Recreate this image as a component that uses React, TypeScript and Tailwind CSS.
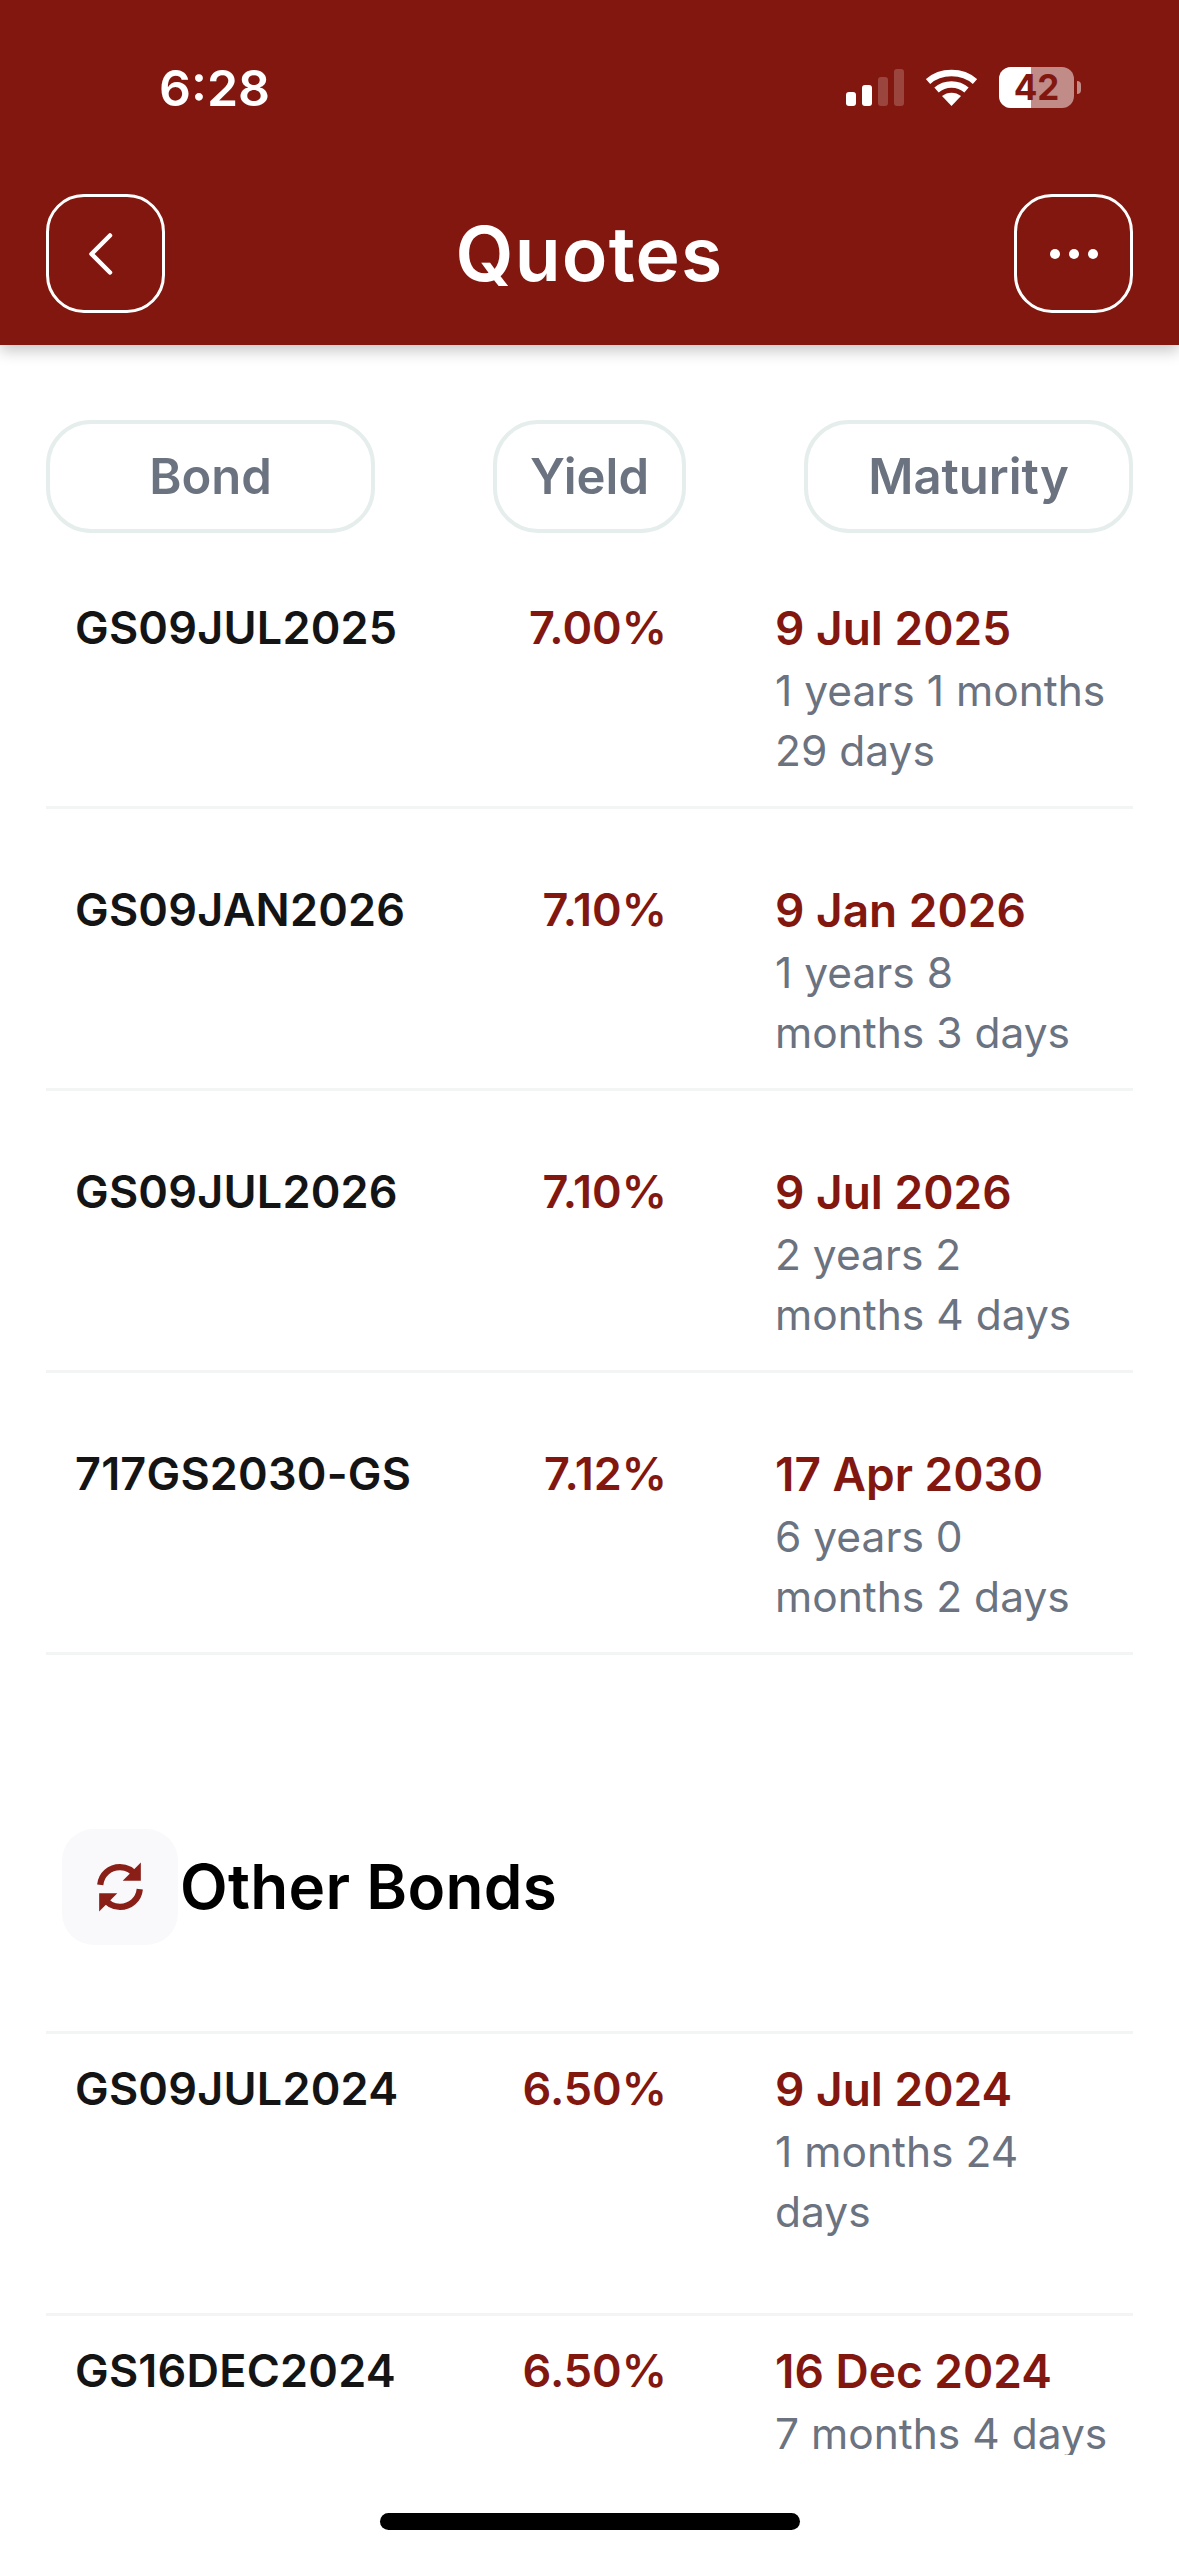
import React from "react";

const font = { fontFamily: "Inter, 'Liberation Sans', sans-serif" };

type Row = { name: string; y: string; date: string; l1: string; l2?: string };

const top: Row[] = [
  { name: "GS09JUL2025", y: "7.00%", date: "9 Jul 2025", l1: "1 years 1 months", l2: "29 days" },
  { name: "GS09JAN2026", y: "7.10%", date: "9 Jan 2026", l1: "1 years 8", l2: "months 3 days" },
  { name: "GS09JUL2026", y: "7.10%", date: "9 Jul 2026", l1: "2 years 2", l2: "months 4 days" },
  { name: "717GS2030-GS", y: "7.12%", date: "17 Apr 2030", l1: "6 years 0", l2: "months 2 days" },
];
const other: Row[] = [
  { name: "GS09JUL2024", y: "6.50%", date: "9 Jul 2024", l1: "1 months 24", l2: "days" },
  { name: "GS16DEC2024", y: "6.50%", date: "16 Dec 2024", l1: "7 months 4 days" },
];

function BondRow({ r, pad }: { r: Row; pad: string }) {
  return (
    <div className={`flex h-[282px] flex-none border-b-[3px] border-[#f3f5f5] pl-[29px] ${pad}`}>
      <div className="w-[430px] text-[45px] leading-[66px] font-semibold tracking-[0.2px] text-[#141414] whitespace-nowrap">{r.name}</div>
      <div className="w-[162px] text-right text-[45px] leading-[66px] font-semibold text-[#82170f] whitespace-nowrap">{r.y}</div>
      <div className="ml-[108px] flex flex-col whitespace-nowrap">
        <div className="text-[46px] leading-[66px] font-semibold text-[#82170f]">{r.date}</div>
        <div className="text-[42.5px] leading-[60px] text-[#6b7280]">{r.l1}</div>
        {r.l2 && <div className="text-[42.5px] leading-[60px] text-[#6b7280]">{r.l2}</div>}
      </div>
    </div>
  );
}

function Pill({ w, children }: { w: string; children: React.ReactNode }) {
  return (
    <div className={`${w} flex h-[113px] items-center justify-center rounded-[45px] border-[4px] border-[#e5eeec] text-[49px] font-semibold text-[#6b7280]`}>
      {children}
    </div>
  );
}

export default function App() {
  return (
    <div className="relative flex h-[2556px] w-[1179px] flex-col overflow-hidden bg-white" style={font}>
      <header className="relative z-10 flex h-[345px] flex-none flex-col bg-[#82170f] px-[46px] shadow-[0_6px_14px_rgba(0,0,0,0.22)]">
        <div className="flex h-[194px] flex-none items-start justify-between">
          <div className="ml-[113px] mt-[60px] text-[50px] leading-[56px] font-semibold text-white">6:28</div>
          <div className="mt-[67px] mr-[52px] flex items-start">
            <div className="mt-[2px] flex h-[37px] items-end gap-[6px]">
              <div className="h-[14px] w-[10px] rounded-[3px] bg-white" />
              <div className="h-[21px] w-[10px] rounded-[3px] bg-white" />
              <div className="h-[29px] w-[10px] rounded-[3px] bg-white/20" />
              <div className="h-[37px] w-[10px] rounded-[3px] bg-white/20" />
            </div>
            <svg className="ml-[22px] mt-[2px]" width="51" height="37" viewBox="0 0 51 37" fill="none">
              <path d="M2 12.5C14.5 1 36.5 1 49 12.5" stroke="white" strokeWidth="6.5" />
              <path d="M10.5 21C19 13.5 32 13.5 40.5 21" stroke="white" strokeWidth="6.5" />
              <path d="M25.5 37L16 27C21.5 22.5 29.5 22.5 35 27L25.5 37Z" fill="white" />
            </svg>
            <div className="relative ml-[22px] h-[41px] w-[75px] overflow-hidden rounded-[12px] bg-white/50">
              <div className="absolute left-0 top-0 h-full w-[32px] bg-white" />
              <div className="absolute inset-0 flex items-center justify-center text-[35px] font-bold leading-none text-[#82170f]">42</div>
            </div>
            <div className="ml-[3px] mt-[14px] h-[13px] w-[4px] rounded-r-[4px] bg-white/50" />
          </div>
        </div>
        <div className="flex items-center justify-between">
          <div className="flex h-[119px] w-[119px] items-center justify-center rounded-[38px] border-[3px] border-white">
            <svg className="-ml-[3px]" width="30" height="48" viewBox="0 0 30 48" fill="none">
              <path d="M21 5.5L2.5 24L21 42.5" stroke="white" strokeWidth="4.5" strokeLinecap="round" strokeLinejoin="round" />
            </svg>
          </div>
          <div className="text-[75px] leading-none font-semibold tracking-[1.2px] text-white">Quotes</div>
          <div className="flex h-[119px] w-[119px] items-center justify-center gap-[9px] rounded-[38px] border-[3px] border-white">
            <span className="h-[10px] w-[10px] rounded-full bg-white" />
            <span className="h-[10px] w-[10px] rounded-full bg-white" />
            <span className="h-[10px] w-[10px] rounded-full bg-white" />
          </div>
        </div>
      </header>

      <main className="flex h-[2110px] flex-none flex-col overflow-hidden px-[46px] pt-[75px]">
        <div className="flex flex-none justify-between">
          <Pill w="w-[329px]">Bond</Pill>
          <Pill w="w-[193px]">Yield</Pill>
          <Pill w="w-[329px]">Maturity</Pill>
        </div>
        <div className="-mt-[6px] flex flex-col">
          {top.map((r) => (
            <BondRow key={r.name} r={r} pad="pt-[68px]" />
          ))}
        </div>
        <div className="mt-[174px] flex flex-none items-center pl-[16px]">
          <div className="flex h-[116px] w-[116px] items-center justify-center rounded-[32px] bg-[#f9f9fb]">
            <svg width="50" height="50" viewBox="0 0 24 24" fill="none" stroke="#8a1f18" strokeWidth="3" strokeLinecap="butt" strokeLinejoin="miter">
              <path d="M2.5 11C3 6 7 2.5 12 2.5C15.5 2.5 18 4 20 7" />
              <path d="M21.5 1.5V8.5H14.5Z" fill="#8a1f18" strokeWidth="1" />
              <path d="M21.5 13C21 18 17 21.5 12 21.5C8.5 21.5 6 20 4 17" />
              <path d="M2.5 22.5V15.5H9.5Z" fill="#8a1f18" strokeWidth="1" />
            </svg>
          </div>
          <div className="ml-[2px] text-[62px] leading-none font-semibold tracking-[0.3px] text-black">Other Bonds</div>
        </div>
        <div className="mt-[86px] flex flex-col border-t-[3px] border-[#f3f5f5]">
          {other.map((r) => (
            <BondRow key={r.name} r={r} pad="pt-[22px]" />
          ))}
        </div>
      </main>

      <div className="flex flex-1 justify-center bg-white pt-[58px]">
        <div className="h-[17px] w-[420px] rounded-full bg-black" />
      </div>
    </div>
  );
}
